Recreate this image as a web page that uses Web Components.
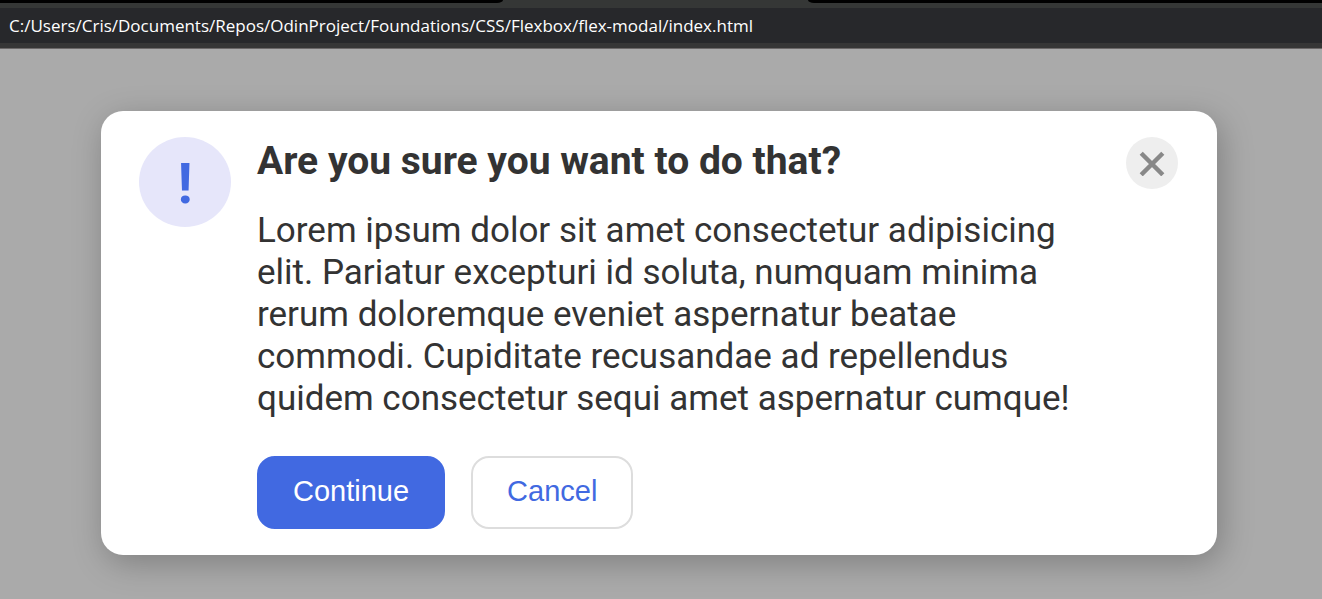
<!DOCTYPE html>
<html lang="en">
<head>
<meta charset="utf-8">
<title>Flex modal</title>
<style>
body { margin: 0; background: #aaa; font-family: Roboto, sans-serif; color: #333; }
</style>
</head>
<body>
<modal-page>
  <address-bar slot="bar">C:/Users/Cris/Documents/Repos/OdinProject/Foundations/CSS/Flexbox/flex-modal/index.html</address-bar>
  <confirm-modal>
    <span slot="icon">!</span>
    <span slot="title">Are you sure you want to do that?</span>
    Lorem ipsum dolor sit amet consectetur adipisicing elit. Pariatur excepturi id soluta, numquam minima rerum doloremque eveniet aspernatur beatae commodi. Cupiditate recusandae ad repellendus quidem consectetur sequi amet aspernatur cumque!
    <modal-button slot="actions" class="primary">Continue</modal-button>
    <modal-button slot="actions">Cancel</modal-button>
  </confirm-modal>
</modal-page>
<script>
function define(name, html) {
  const template = document.createElement('template');
  template.innerHTML = html;
  customElements.define(name, class extends HTMLElement {
    constructor() {
      super();
      this.attachShadow({ mode: 'open' }).append(template.content.cloneNode(true));
    }
  });
}

define('modal-page', `
<style>
  :host { display: flex; flex-direction: column; min-height: 100vh; }
  main { flex: 1; display: flex; align-items: center; padding: 18px 105px 0 101px; }
  ::slotted(confirm-modal) { flex: 1; min-width: 0; }
</style>
<slot name="bar"></slot>
<main><slot></slot></main>`);

define('address-bar', `
<style>
  :host { display: block; background: #27282b; color: #fff; font: 17px/24px "Open Sans", sans-serif; }
  .tabs { display: flex; height: 3px; background: #353736; }
  .before, .after { background: #000; }
  .before { flex: 503; border-bottom-right-radius: 6px 3px; }
  .tab { flex: 305; }
  .after { flex: 514; border-bottom-left-radius: 6px 3px; }
  .url { border-top: 5px solid #353736; border-bottom: 5px solid #363636; padding: 6px 9px 5px; white-space: nowrap; overflow: hidden; }
  .edge { height: 1px; background: #6b6868; }
</style>
<div class="tabs"><div class="before"></div><div class="tab"></div><div class="after"></div></div>
<div class="url"><slot></slot></div>
<div class="edge"></div>`);

define('confirm-modal', `
<style>
  :host { display: block; }
  section { display: flex; align-items: flex-start; gap: 26px; padding: 26px 39px 26px 38px; box-sizing: border-box;
    background: #fff; border-radius: 22px; box-shadow: 4px 8px 32px rgba(0,0,0,.25); }
  .icon { flex: none; display: flex; align-items: center; justify-content: center; width: 92px; height: 90px;
    box-sizing: border-box; padding-top: 4px;
    border-radius: 50%; background: #e6e6fa; color: #4169e1; font-size: 56px; line-height: 64px; font-weight: 700; }
  .body { flex: 1; min-width: 0; }
  h1 { margin: 0 0 25px; font-size: 39px; line-height: 48px; font-weight: 700; }
  p { margin: 0 0 36px; font-size: 35px; line-height: 42px; }
  .actions { display: flex; gap: 26px; }
  .close { flex: none; display: flex; align-items: center; justify-content: center; width: 52px; height: 52px;
    padding: 0; border: 0; border-radius: 50%; background: #eee; color: #888; cursor: pointer; }
  svg { display: block; }
</style>
<section role="dialog" aria-labelledby="title">
  <div class="icon"><slot name="icon"></slot></div>
  <div class="body">
    <h1 id="title"><slot name="title"></slot></h1>
    <p><slot></slot></p>
    <div class="actions"><slot name="actions"></slot></div>
  </div>
  <button class="close" type="button" aria-label="Close">
    <svg width="26" height="26" viewBox="0 0 26 26" fill="none" stroke="currentColor" stroke-width="4.4"><path d="M2.2 3.2l21.6 21.6M23.8 3.2l-21.6 21.6"/></svg>
  </button>
</section>`);

define('modal-button', `
<style>
  :host { display: block; }
  button { display: block; height: 73px; padding: 0 34px 4px; border: 2px solid #ddd; border-radius: 18px;
    background: #fff; color: #4169e1; font: 29px/34px "Liberation Sans", Arial, sans-serif; cursor: pointer; }
  :host(.primary) button { border-color: #4169e1; background: #4169e1; color: #fff; }
</style>
<button type="button"><slot></slot></button>`);
</script>
</body>
</html>
